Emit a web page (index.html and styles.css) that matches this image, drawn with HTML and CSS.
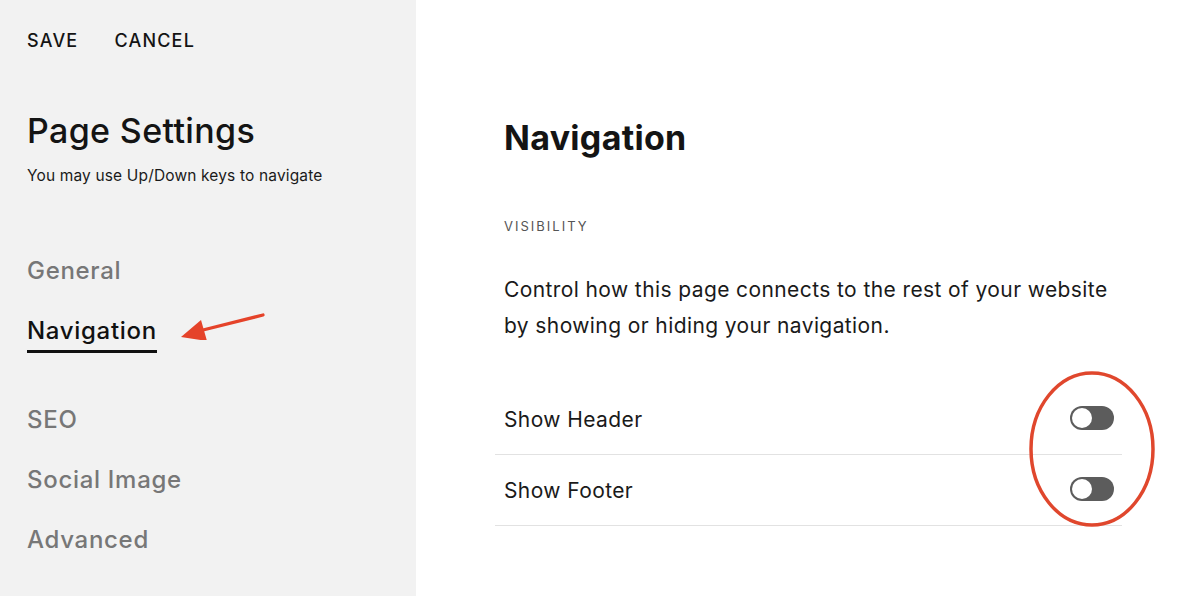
FILE: index.html
```html
<!DOCTYPE html>
<html lang="en">
<head>
<meta charset="utf-8">
<title>Page Settings</title>
<link rel="stylesheet" href="styles.css">
</head>
<body>
<div class="app">
  <aside class="sidebar">
    <div class="actions">
      <span class="action">SAVE</span>
      <span class="action">CANCEL</span>
    </div>
    <h1 class="title">Page Settings</h1>
    <p class="hint">You may use Up/Down keys to navigate</p>
    <nav class="menu">
      <a class="menu-item">General</a>
      <a class="menu-item active">Navigation</a>
      <a class="menu-item">SEO</a>
      <a class="menu-item">Social Image</a>
      <a class="menu-item">Advanced</a>
    </nav>
    <svg class="arrow" width="90" height="30" viewBox="0 0 90 30">
      <line x1="86" y1="5" x2="22" y2="21" stroke="#e5432a" stroke-width="3.2" stroke-linecap="round"/>
      <polygon points="4,27 24,10 30,31" fill="#e5432a"/>
    </svg>
  </aside>
  <main class="content">
    <h2 class="heading">Navigation</h2>
    <div class="section-label">VISIBILITY</div>
    <p class="desc">Control how this page connects to the rest of your website by showing or hiding your navigation.</p>
    <div class="rows">
      <div class="row">
        <span class="row-label">Show Header</span>
        <span class="toggle"><span class="knob"></span></span>
      </div>
      <div class="row">
        <span class="row-label">Show Footer</span>
        <span class="toggle"><span class="knob"></span></span>
      </div>
      <svg class="circle" width="130" height="160" viewBox="0 0 130 160">
        <ellipse cx="65" cy="80" rx="61" ry="76" fill="none" stroke="#e0472d" stroke-width="3.5"/>
      </svg>
    </div>
  </main>
</div>
</body>
</html>
```

FILE: styles.css
```css
* { box-sizing: border-box; }
html, body { margin: 0; padding: 0; }
body {
  font-family: Inter, "Liberation Sans", Arial, sans-serif;
  color: #111;
  background: #fff;
}
.app {
  display: flex;
  width: 1200px;
  height: 596px;
  overflow: hidden;
}
.sidebar {
  position: relative;
  width: 416px;
  flex: none;
  background: #f2f2f2;
  padding: 31px 0 0 27px;
}
.actions {
  display: flex;
  gap: 36px;
  font-size: 18px;
  line-height: 20px;
  letter-spacing: 1.2px;
  font-weight: 500;
  color: #141414;
}
.title {
  margin: 60px 0 0;
  font-size: 34px;
  line-height: 40px;
  font-weight: 500;
  letter-spacing: 0.35px;
  color: #141414;
}
.hint {
  margin: 16px 0 0;
  font-size: 15.5px;
  line-height: 18px;
  letter-spacing: 0.15px;
  color: #1a1a1a;
}
.menu {
  display: flex;
  flex-direction: column;
  align-items: flex-start;
  margin-top: 72px;
}
.menu-item {
  font-size: 24px;
  line-height: 28px;
  letter-spacing: 0.7px;
  color: #777;
  font-weight: 500;
  margin-bottom: 32px;
}
.menu-item.active {
  color: #111;
  padding-bottom: 5px;
  border-bottom: 3px solid #111;
  margin-bottom: 53px;
}
.arrow {
  position: absolute;
  left: 177px;
  top: 310px;
}
.content {
  flex: 1;
  padding: 118px 0 0 88px;
}
.heading {
  margin: 0;
  font-size: 34px;
  line-height: 40px;
  font-weight: 700;
  letter-spacing: 0.3px;
  color: #141414;
}
.section-label {
  margin-top: 60px;
  font-size: 13px;
  line-height: 16px;
  letter-spacing: 2px;
  color: #555;
}
.desc {
  margin: 38px 0 0;
  width: 625px;
  font-size: 21px;
  line-height: 36px;
  letter-spacing: 0.4px;
  color: #1a1a1a;
}
.rows {
  position: relative;
  margin: 40px 0 0 -9px;
  width: 627px;
}
.row {
  display: flex;
  align-items: center;
  justify-content: space-between;
  height: 71px;
  padding: 0 8px 0 9px;
  border-bottom: 1px solid #e2e2e2;
}
.row-label {
  font-size: 21px;
  letter-spacing: 0.4px;
  color: #1a1a1a;
}
.toggle {
  position: relative;
  width: 44px;
  height: 24px;
  margin-top: -2px;
  border-radius: 12px;
  background: #5c5c5c;
}
.knob {
  position: absolute;
  left: 2px;
  top: 2px;
  width: 20px;
  height: 20px;
  border-radius: 50%;
  background: #fff;
}
.circle {
  position: absolute;
  left: 532px;
  top: -15px;
}
```
